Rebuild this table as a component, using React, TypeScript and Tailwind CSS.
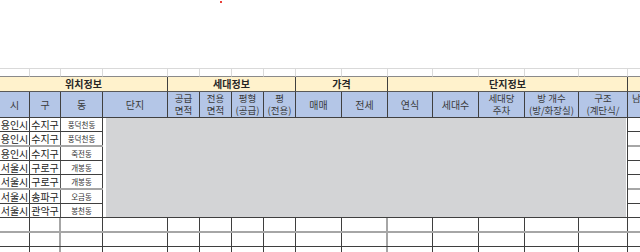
import React from "react";

const font = "font-['Noto_Sans_CJK_KR','Noto_Sans',sans-serif]";

const headers: string[][] = [
  ["시"],
  ["구"],
  ["동"],
  ["단지"],
  ["공급", "면적"],
  ["전용", "면적"],
  ["평형", "(공급)"],
  ["평", "(전용)"],
  ["매매"],
  ["전세"],
  ["연식"],
  ["세대수"],
  ["세대당", "주차"],
  ["방 개수", "(방/화장실)"],
  ["구조", "(계단식/"],
  ["남향여부", ""],
];

const rows = [
  ["용인시", "수지구", "풍덕천동"],
  ["용인시", "수지구", "풍덕천동"],
  ["용인시", "수지구", "죽전동"],
  ["서울시", "구로구", "개봉동"],
  ["서울시", "구로구", "개봉동"],
  ["서울시", "송파구", "오금동"],
  ["서울시", "관악구", "봉천동"],
];

// heights of the 7 data rows (117 -> 217)
const rowH = ["h-[14px]", "h-[15px]", "h-[14px]", "h-[14px]", "h-[15px]", "h-[14px]", "h-[14px]"];
// rows whose bottom line looks lighter/thicker
const softBottom = [1, 4];

export default function App() {
  return (
    <div className={`w-[640px] h-[252px] overflow-hidden bg-white ${font}`}>
      <div className="h-[67px]">
        <div className="ml-[220px] w-[2px] h-[2px] bg-[#e8403a] mt-px" />
      </div>

      <div className="ml-[-3px] w-[691px]">
        {/* partial empty row */}
        <div className="grid grid-cols-[33px_31px_42px_65px_32px_32px_32px_32px_46px_46px_45px_46px_46px_54px_49px_60px] h-[9px]">
          {headers.map((_, i) => (
            <div key={i} className="border-t border-t-[#d9d9d9] border-r border-r-[#dadada] border-b border-b-[#8a8a8a]" />
          ))}
        </div>

        {/* group header row */}
        <div className="grid grid-cols-[171px_128px_92px_240px_60px] h-[15px] bg-[#fff2cc] text-[10px] leading-[14px] font-bold text-[#262626]">
          <div className="border-r border-r-[#404040] border-b border-b-[#595959] text-center pl-[3px]">위치정보</div>
          <div className="border-r border-r-[#404040] border-b border-b-[#595959] text-center">세대정보</div>
          <div className="border-r border-r-[#404040] border-b border-b-[#595959] text-center">가격</div>
          <div className="border-r border-r-[#404040] border-b border-b-[#595959] text-center">단지정보</div>
          <div className="border-b border-b-[#595959]" />
        </div>

        {/* column header row */}
        <div className="grid grid-cols-[33px_31px_42px_65px_32px_32px_32px_32px_46px_46px_45px_46px_46px_54px_49px_60px] h-[26px] bg-[#b4c6e7] text-[#3a3a3a]">
          {headers.map((h, i) => (
            <div
              key={i}
              className={`border-r border-r-[#404040] border-b border-b-[#404040] flex flex-col overflow-hidden whitespace-nowrap ${
                h.length > 1 ? "justify-start text-[9.5px] leading-[12px]" : "justify-center text-[10px] leading-[12px]"
              } ${i === 0 ? "pl-[3px]" : ""} ${i === 15 ? "items-start pl-[4px]" : "items-center"}`}
            >
              {h.length > 1 ? (
                <div className="flex flex-col items-center">
                  <span>{h[0]}</span>
                  <span>{h[1]}</span>
                </div>
              ) : (
                <span>{h[0]}</span>
              )}
            </div>
          ))}
        </div>

        {/* data block */}
        <div className="flex">
          <div className="w-[106px]">
            {rows.map((r, i) => {
              const soft = softBottom.includes(i);
              return (
                <div
                  key={i}
                  className={`grid grid-cols-[33px_31px_42px] ${rowH[i]} ${
                    soft ? "border-b-2 border-b-[#a6a6a6]" : "border-b border-b-[#3f3f3f]"
                  }`}
                >
                  <div className="border-r border-r-[#3f3f3f] text-[10px] leading-none text-[#1a1a1a] flex items-center justify-center pl-[3px] whitespace-nowrap">
                    {r[0]}
                  </div>
                  <div className="border-r border-r-[#555555] text-[10px] leading-none text-[#1a1a1a] flex items-center justify-center whitespace-nowrap">
                    {r[1]}
                  </div>
                  <div className="border-r border-r-[#3f3f3f] text-[7.5px] leading-none text-[#333333] flex items-center justify-center whitespace-nowrap">
                    {r[2]}
                  </div>
                </div>
              );
            })}
          </div>
          <div className="w-[525px] h-[100px] border-r border-r-[#3f3f3f] border-b border-b-[#3f3f3f] pl-[3px] pr-px">
            <div className="h-full bg-[#d3d4d6]" />
          </div>
          <div className="w-[60px]">
            {rows.map((_, i) => {
              const soft = softBottom.includes(i);
              return (
                <div
                  key={i}
                  className={`${rowH[i]} ${soft ? "border-b-2 border-b-[#a6a6a6]" : "border-b border-b-[#3f3f3f]"}`}
                />
              );
            })}
          </div>
        </div>

        {/* empty rows below */}
        {["h-[15px]", "h-[14px]", "h-[14px]"].map((h, ri) => (
          <div
            key={ri}
            className={`grid grid-cols-[33px_31px_42px_65px_32px_32px_32px_32px_46px_46px_45px_46px_46px_54px_49px_60px] ${h} ${
              ri === 0 ? "border-b-2 border-b-[#a6a6a6]" : "border-b border-b-[#3f3f3f]"
            }`}
          >
            {headers.map((_, i) => (
              <div
                key={i}
                className={
                  i === 1 || i === 9
                    ? "border-r-2 border-r-[#a6a6a6]"
                    : "border-r border-r-[#3f3f3f]"
                }
              />
            ))}
          </div>
        ))}
      </div>
    </div>
  );
}
